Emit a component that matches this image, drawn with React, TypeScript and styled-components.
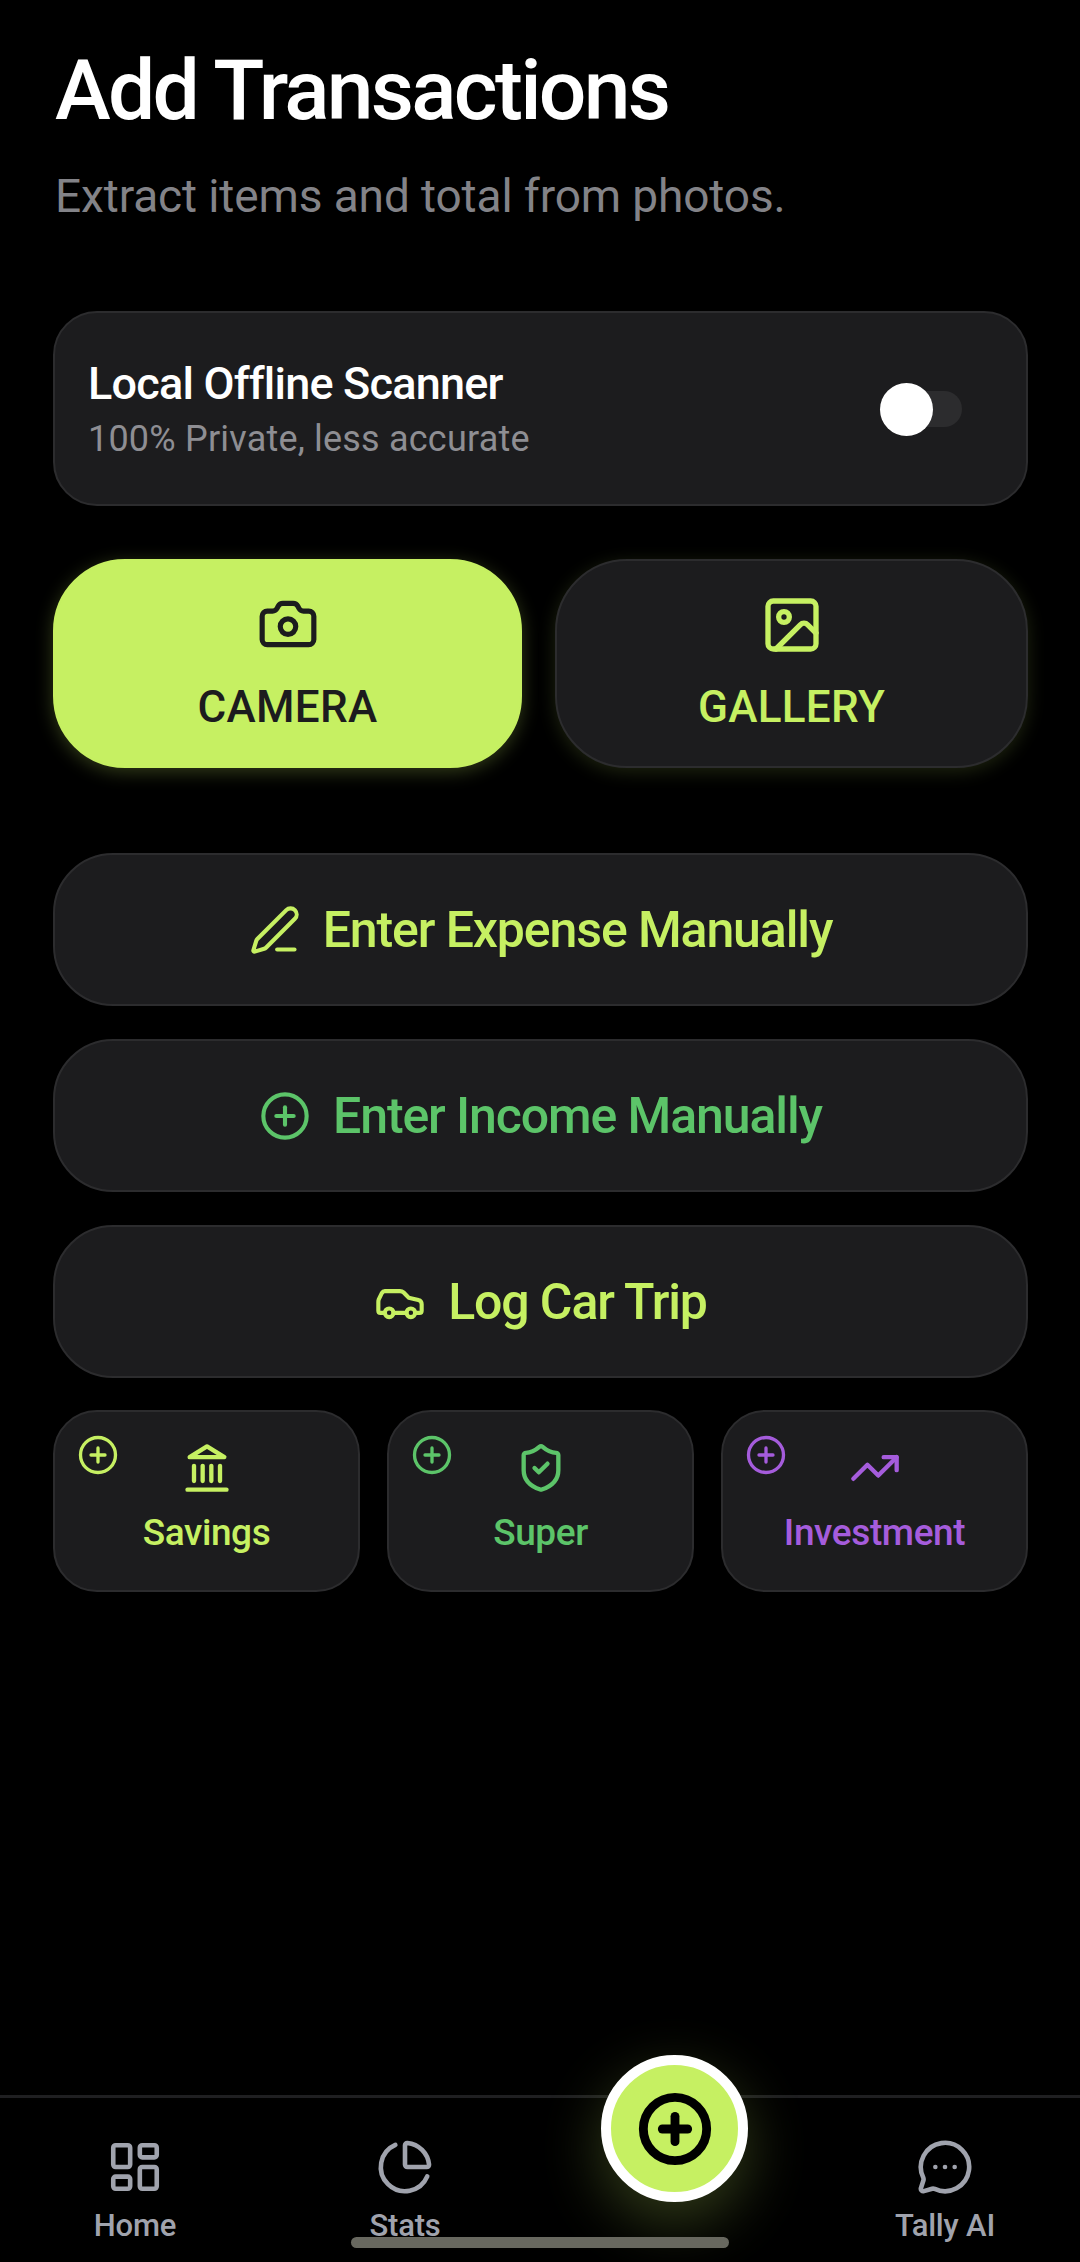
import React from "react";
import styled, { createGlobalStyle } from "styled-components";
import { Camera, Image, PenLine, CirclePlus, Car, ShieldCheck, TrendingUp, LayoutDashboard, ChartPie, MessageCircleMore } from "lucide-react";

const lime = "#c6f062";
const green = "#5cc469";
const purple = "#a55cdc";

const Global = createGlobalStyle`
  html, body { margin: 0; padding: 0; background: #000; }
  * { box-sizing: border-box; }
  body { font-family: Roboto, "Noto Sans", sans-serif; }
`;
const Screen = styled.div`
  width: 1080px; height: 2262px; background: #000; display: flex; flex-direction: column; position: relative; overflow: hidden;
`;
const Main = styled.main`
  flex: 1; padding: 47px 52px 0 53px; display: flex; flex-direction: column;
`;
const Title = styled.h1`
  margin: 0 0 0 2px; font-size: 84px; line-height: 88px; font-weight: 500; color: #fff; letter-spacing: -2.75px; white-space: nowrap;
`;
const Subtitle = styled.p`
  margin: 33px 0 0 2px; font-size: 46px; line-height: 56px; color: #838388; letter-spacing: -.12px; white-space: nowrap;
`;
const Card = styled.section`
  margin-top: 87px; height: 195px; background: #1c1c1e; border: 2px solid #2c2c2e; border-radius: 44px;
  display: flex; align-items: center; justify-content: space-between; padding: 0 64px 0 33px;
`;
const CardTitle = styled.div`
  font-size: 45px; line-height: 54px; font-weight: 500; color: #fff; letter-spacing: -.8px; white-space: nowrap;
`;
const CardSub = styled.div`
  margin-top: 6px; font-size: 36px; line-height: 44px; color: #8e8e93; letter-spacing: .2px; white-space: nowrap;
`;
const Track = styled.div`
  width: 82px; height: 36px; border-radius: 18px; background: #2c2c2e; position: relative;
`;
const Thumb = styled.div`
  position: absolute; left: 0; top: -8px; width: 53px; height: 53px; border-radius: 50%; background: #fff;
`;
const TwoCols = styled.div`
  margin-top: 53px; display: grid; grid-template-columns: 469px 473px; gap: 33px;
`;
const BigBtn = styled.div<{ $on?: boolean }>`
  height: 209px; border-radius: 72px; display: flex; flex-direction: column; align-items: center; padding-top: 32px;
  background: ${p => (p.$on ? lime : "#1c1c1e")};
  color: ${p => (p.$on ? "#1c1c1e" : lime)};
  border: 2px solid ${p => (p.$on ? lime : "#2c2c2e")};
  box-shadow: 0 4px 18px rgba(198, 240, 98, ${p => (p.$on ? 0.25 : 0.15)});
`;
const BigLabel = styled.span<{ $on?: boolean }>`
  margin-top: ${p => (p.$on ? 24 : 22)}px; font-size: 44px; line-height: 56px; font-weight: 500; letter-spacing: .3px; white-space: nowrap;
`;
const Stack = styled.div`
  margin-top: 85px; display: flex; flex-direction: column; gap: 33px;
`;
const WideBtn = styled.div<{ $c: string }>`
  height: 153px; border-radius: 60px; background: #1c1c1e; border: 2px solid #2c2c2e; color: ${p => p.$c};
  display: flex; align-items: center; justify-content: center; gap: 22px;
`;
const WideLabel = styled.span`
  font-size: 50px; line-height: 60px; font-weight: 500; letter-spacing: -1.1px; white-space: nowrap;
`;
const Tiles = styled.div`
  margin-top: 32px; display: grid; grid-template-columns: repeat(3, 307px); gap: 27px;
`;
const Tile = styled.div<{ $c: string }>`
  height: 182px; border-radius: 44px; background: #1c1c1e; border: 2px solid #2c2c2e; color: ${p => p.$c};
  display: flex; flex-direction: column; align-items: center; padding-top: 30px; position: relative;
`;
const TilePlus = styled.div`
  position: absolute; left: 22px; top: 22px; display: flex;
`;
const TileLabel = styled.span`
  margin-top: 16px; font-size: 37px; line-height: 46px; font-weight: 500; letter-spacing: -.4px; white-space: nowrap;
`;
const Nav = styled.nav`
  height: 167px; border-top: 3px solid #1f1f21; display: grid; grid-template-columns: repeat(4, 270px); background: #000;
`;
const NavItem = styled.div`
  display: flex; flex-direction: column; align-items: center; padding-top: 40px; color: #a0a3ad;
`;
const NavLabel = styled.span`
  margin-top: 11px; font-size: 31px; line-height: 38px; font-weight: 500; letter-spacing: -.2px; white-space: nowrap;
`;
const Fab = styled.div`
  position: absolute; left: 601px; top: 2055px; width: 147px; height: 147px; border-radius: 50%; background: ${lime};
  border: 10px solid #fff; display: flex; align-items: center; justify-content: center; color: #000;
  box-shadow: 0 20px 60px rgba(198, 240, 98, .25);
`;
const HomeBar = styled.div`
  position: absolute; left: 351px; top: 2237px; width: 378px; height: 11px; border-radius: 6px; background: #68685f;
`;

const Bank = ({ size }: { size: number }) => (
  <svg width={size} height={size} viewBox="0 0 24 24" fill="none" stroke="currentColor" strokeWidth="2" strokeLinecap="round" strokeLinejoin="round">
    <line x1="3" y1="22" x2="21" y2="22" />
    <line x1="6" y1="18" x2="6" y2="11" />
    <line x1="10" y1="18" x2="10" y2="11" />
    <line x1="14" y1="18" x2="14" y2="11" />
    <line x1="18" y1="18" x2="18" y2="11" />
    <polygon points="12 2 20 7 4 7" />
  </svg>
);

export default function App() {
  return (
    <Screen>
      <Global />
      <Main>
        <Title>Add Transactions</Title>
        <Subtitle>Extract items and total from photos.</Subtitle>
        <Card>
          <div>
            <CardTitle>Local Offline Scanner</CardTitle>
            <CardSub>100% Private, less accurate</CardSub>
          </div>
          <Track><Thumb /></Track>
        </Card>
        <TwoCols>
          <BigBtn $on><Camera size={62} strokeWidth={2} /><BigLabel $on>CAMERA</BigLabel></BigBtn>
          <BigBtn><Image size={64} strokeWidth={2} /><BigLabel>GALLERY</BigLabel></BigBtn>
        </TwoCols>
        <Stack>
          <WideBtn $c={lime}><PenLine size={52} strokeWidth={1.9} /><WideLabel>Enter Expense Manually</WideLabel></WideBtn>
          <WideBtn $c={green}><CirclePlus size={52} strokeWidth={1.9} /><WideLabel>Enter Income Manually</WideLabel></WideBtn>
          <WideBtn $c={lime}><Car size={52} strokeWidth={1.9} /><WideLabel>Log Car Trip</WideLabel></WideBtn>
        </Stack>
        <Tiles>
          <Tile $c={lime}><TilePlus><CirclePlus size={42} strokeWidth={1.9} /></TilePlus><Bank size={52} /><TileLabel>Savings</TileLabel></Tile>
          <Tile $c={green}><TilePlus><CirclePlus size={42} strokeWidth={1.9} /></TilePlus><ShieldCheck size={52} strokeWidth={2} /><TileLabel>Super</TileLabel></Tile>
          <Tile $c={purple}><TilePlus><CirclePlus size={42} strokeWidth={1.9} /></TilePlus><TrendingUp size={52} strokeWidth={2} /><TileLabel>Investment</TileLabel></Tile>
        </Tiles>
      </Main>
      <Nav>
        <NavItem><LayoutDashboard size={58} strokeWidth={1.9} /><NavLabel>Home</NavLabel></NavItem>
        <NavItem><ChartPie size={58} strokeWidth={1.9} /><NavLabel>Stats</NavLabel></NavItem>
        <div />
        <NavItem><MessageCircleMore size={58} strokeWidth={1.9} /><NavLabel>Tally AI</NavLabel></NavItem>
      </Nav>
      <Fab><CirclePlus size={76} strokeWidth={2.8} /></Fab>
      <HomeBar />
    </Screen>
  );
}
